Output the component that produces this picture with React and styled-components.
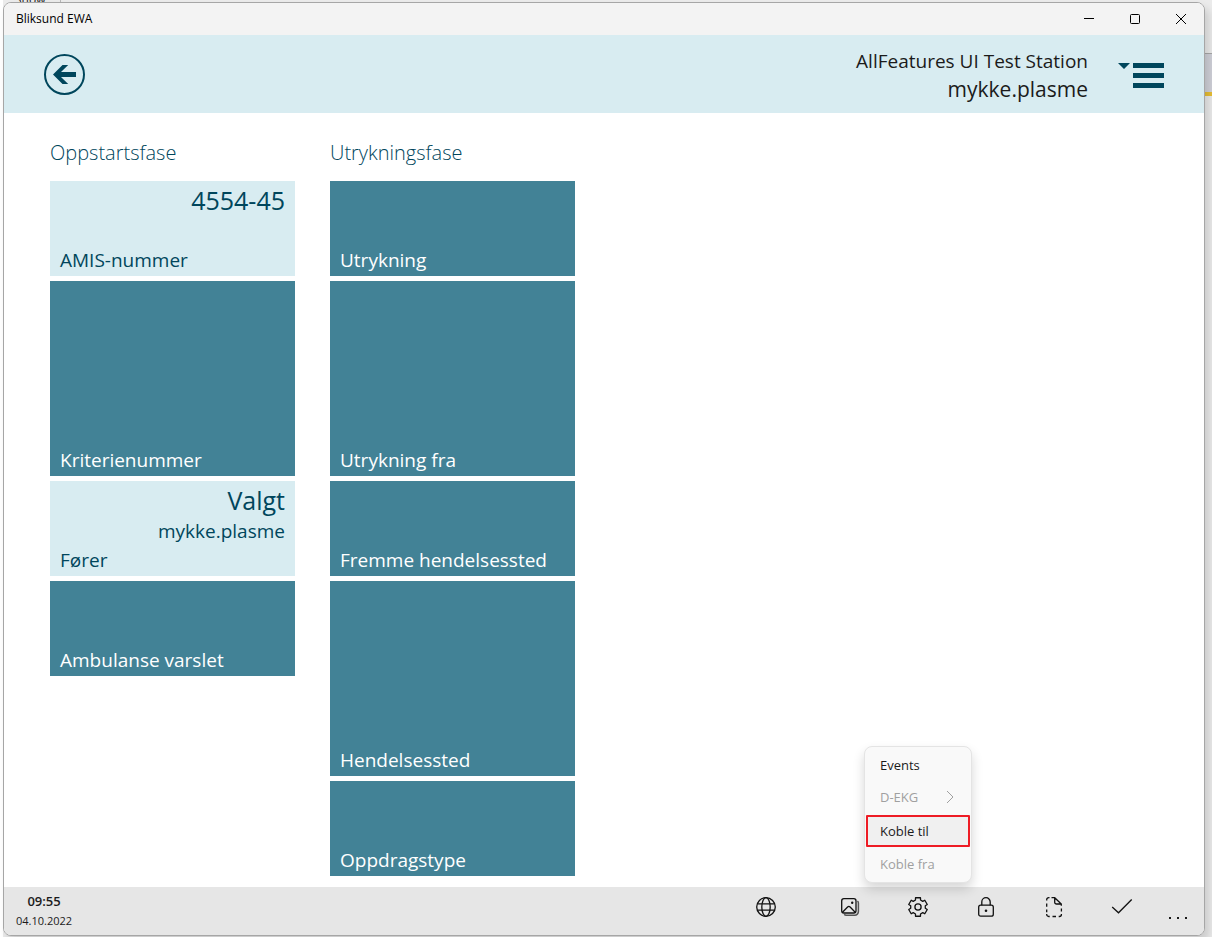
import React from 'react';
import styled, { createGlobalStyle } from 'styled-components';

const Global = createGlobalStyle`
  *, *::before, *::after { box-sizing: border-box; }
  body { margin: 0; font-family: "Open Sans", "Noto Sans", sans-serif; color: #1b1b1b; background: #fff; }
  button { font: inherit; color: inherit; background: none; border: 0; padding: 0; cursor: pointer; }
  h1, h2, p { margin: 0; font-weight: 400; }
  svg { display: block; }
`;

const Desktop = styled.div`
  position: relative;
  display: flex;
  min-height: 100vh;
  padding: 2px 7px 1px 3px;
  background: linear-gradient(#fff, #fff) left / 3px 100% no-repeat, #ebebeb;
`;

const BehindText = styled.span`
  position: absolute;
  top: -8px;
  left: 0;
  width: 61px;
  padding-left: 15px;
  border-right: 1px solid #b8b8b8;
  font-size: 12px;
  line-height: 16px;
`;

const BehindEdge = styled.div`
  position: absolute;
  top: 53px;
  right: 0;
  width: 7px;
  height: 43px;
  background: #d0d1d9;
  border-top: 1px solid #a8a8a8;
  border-bottom: 4px solid #e8bf35;
`;

const AppWindow = styled.div`
  position: relative;
  flex: 1;
  display: flex;
  flex-direction: column;
  min-width: 0;
  border: 1px solid #a6a6a6;
  border-radius: 8px;
  background: #fff;
  box-shadow: 4px 6px 8px rgba(0, 0, 0, 0.14);
`;

const TitleBar = styled.header`
  display: flex;
  align-items: center;
  justify-content: space-between;
  height: 32px;
  padding-left: 12px;
  background: #f3f3f3;
  border-radius: 7px 7px 0 0;
`;

const Title = styled.h1`
  font-size: 12px;
  line-height: 16px;
  color: #000;
`;

const WindowControls = styled.div`
  display: flex;
`;

const ControlButton = styled.button`
  display: grid;
  place-items: center;
  width: 46px;
  height: 32px;
`;

const Banner = styled.div`
  display: flex;
  align-items: center;
  justify-content: space-between;
  height: 78px;
  padding: 0 40px;
  background: #d8ecf1;
  color: #00465c;
`;

const IconButton = styled.button`
  display: block;
`;

const Account = styled.div`
  display: flex;
  align-items: center;
  gap: 30px;
  padding-top: 2px;
`;

const Station = styled.div`
  text-align: right;
  font-size: 19px;
  line-height: 28px;
  color: #1b1b1b;
`;

const UserName = styled.p`
  font-size: 21px;
`;

const Board = styled.main`
  flex: 1;
  display: flex;
  gap: 35px;
  padding: 24px 46px 11px;
`;

const Phase = styled.section`
  display: flex;
  flex-direction: column;
  gap: 5px;
  width: 245px;
`;

const PhaseTitle = styled.h2`
  height: 39px;
  font-size: 20px;
  font-weight: 300;
  line-height: 32px;
  color: #00465c;
`;

const TileButton = styled.button`
  display: flex;
  flex-direction: column;
  justify-content: space-between;
  height: ${(p) => (p.$tall ? 195 : 95)}px;
  padding: 3px 10px 2px;
  text-align: left;
  background: ${(p) => (p.$filled ? '#d8ecf1' : '#428296')};
  color: ${(p) => (p.$filled ? '#00465c' : '#fff')};
`;

const TileValue = styled.span`
  align-self: stretch;
  text-align: right;
  font-size: 25px;
  line-height: 32px;
`;

const TileDetail = styled.span`
  display: block;
  font-size: 19px;
  line-height: 30px;
`;

const TileLabel = styled.span`
  margin-top: auto;
  font-size: 19px;
  line-height: 28px;
`;

const CommandBar = styled.footer`
  display: flex;
  align-items: flex-start;
  justify-content: space-between;
  height: 48px;
  padding: 0 4px 0 12px;
  background: #e6e6e6;
  border-radius: 0 0 7px 7px;
`;

const Clock = styled.div`
  padding-top: 4px;
  text-align: center;
  font-size: 11px;
  line-height: 20px;
`;

const Time = styled.p`
  font-size: 13px;
  font-weight: 600;
`;

const Commands = styled.div`
  display: flex;
`;

const CommandButton = styled.button`
  display: grid;
  place-items: center;
  width: 68px;
  height: 40px;
  margin-right: ${(p) => (p.$apart ? 16 : 0)}px;
  color: #111;
`;

const MoreButton = styled.button`
  display: grid;
  place-items: center;
  width: 44px;
  height: 48px;
  padding-top: 14px;
`;

const MenuAnchor = styled.div`
  position: relative;
`;

const Menu = styled.div`
  position: absolute;
  bottom: 52px;
  left: -20px;
  display: flex;
  flex-direction: column;
  width: 108px;
  padding: 2px 1px;
  background: #f9f9f9;
  border: 1px solid #e4e4e4;
  border-radius: 8px;
  box-shadow: 0 6px 12px rgba(0, 0, 0, 0.16);
`;

const MenuItem = styled.button`
  display: flex;
  align-items: center;
  justify-content: space-between;
  height: 32px;
  padding: 0 14px;
  font-size: 13px;
  line-height: 20px;
  color: #1b1b1b;
  &:disabled { color: #a0a0a0; }
`;

const MarkedItem = styled(MenuItem)`
  margin: 2px 0 1px;
  padding: 0 12px;
  background: #f0f0f0;
  border: 2px solid #ee1c25;
  border-radius: 1px;
`;

const Glyph = ({ size = 22, children, ...rest }) => (
  <svg width={size} height={size} viewBox={`0 0 ${size} ${size}`} fill="none" stroke="currentColor" strokeWidth="1.3" aria-hidden="true" {...rest}>
    {children}
  </svg>
);

const GlobeIcon = () => (
  <Glyph>
    <circle cx="11" cy="11" r="9.3" />
    <ellipse cx="11" cy="11" rx="4.2" ry="9.3" />
    <path d="M2.4 7.8h17.2M2.4 14.2h17.2" />
  </Glyph>
);

const PicturesIcon = () => (
  <Glyph>
    <path d="M18.4 5.2c.7.5 1 1 1 1.8v8.600a3.600 3.600 0 0 1-3.600 3.600H7.200c-.9 0-1.500-.3-2-.9" stroke="#555" strokeWidth="1.500" />
    <rect x="2.700" y="2.700" width="14.300" height="14.300" rx="2.200" />
    <path d="M3.500 16.200l5.100-5.200c.8-.8 1.700-.8 2.500 0l5.100 5.200" />
    <circle cx="13.200" cy="6.800" r="1.200" fill="currentColor" stroke="none" />
  </Glyph>
);

const gearPath = (() => {
  const points = [];
  for (let i = 0; i < 6; i += 1) {
    [[-15, 9.6], [15, 9.6], [20, 7.4]].forEach(([offset, radius]) => {
      const a = ((i * 60 - 90 + offset) * Math.PI) / 180;
      points.push(`${(11 + radius * Math.cos(a)).toFixed(2)} ${(11 + radius * Math.sin(a)).toFixed(2)}`);
    });
    const b = ((i * 60 - 90 + 40) * Math.PI) / 180;
    points.push(`${(11 + 7.4 * Math.cos(b)).toFixed(2)} ${(11 + 7.4 * Math.sin(b)).toFixed(2)}`);
  }
  return `M${points.join('L')}Z`;
})();

const GearIcon = () => (
  <Glyph strokeLinejoin="round">
    <path d={gearPath} />
    <circle cx="11" cy="11" r="3.100" />
  </Glyph>
);

const LockIcon = () => (
  <Glyph>
    <rect x="3.700" y="9.200" width="14.600" height="11" rx="2" />
    <path d="M6.800 9.200V5.900a4.200 4.200 0 0 1 8.400 0v3.300" />
    <circle cx="11" cy="14.700" r="1.300" fill="currentColor" stroke="none" />
  </Glyph>
);

const PageIcon = () => (
  <Glyph>
    <path d="M6.500 1.700H5.700a2 2 0 0 0-2 2v.8M3.700 7.500v3.200M3.700 13.500v2.700M3.700 18v.5a2 2 0 0 0 2 2h1M9.500 20.500h3.500M15.700 20.500h.7a2 2 0 0 0 2-2V18M18.400 12.500v3M8.500 1.700h3.200l6.600 6.400v1.700M11.700 1.700v4.500a1.800 1.800 0 0 0 1.800 1.800h4.800" />
  </Glyph>
);

const CheckIcon = () => (
  <Glyph>
    <path d="M1.200 11l6.300 5.800L20.700 3.500" />
  </Glyph>
);

const BackIcon = () => (
  <Glyph size={41}>
    <circle cx="20.500" cy="20.500" r="19.500" strokeWidth="2" />
    <path d="M9 20.500L18.500 11h5.700l-7.200 7H32v5H17l7.200 7h-5.700z" fill="currentColor" stroke="none" />
  </Glyph>
);

const MenuIcon = () => (
  <svg width="46" height="26" viewBox="0 0 46 26" fill="currentColor" aria-hidden="true">
    <path d="M0 1h12L6 7zM15 1h31v5H15zM15 11h31v5H15zM15 21h31v5H15z" />
  </svg>
);

const phases = [
  {
    title: 'Oppstartsfase',
    tiles: [
      { label: 'AMIS-nummer', value: '4554-45' },
      { label: 'Kriterienummer', tall: true },
      { label: 'Fører', value: 'Valgt', detail: 'mykke.plasme' },
      { label: 'Ambulanse varslet' },
    ],
  },
  {
    title: 'Utrykningsfase',
    tiles: [
      { label: 'Utrykning' },
      { label: 'Utrykning fra', tall: true },
      { label: 'Fremme hendelsessted' },
      { label: 'Hendelsessted', tall: true },
      { label: 'Oppdragstype' },
    ],
  },
];

const Tile = ({ label, value, detail, tall }) => (
  <TileButton $tall={tall} $filled={Boolean(value)}>
    {value && (
      <TileValue>
        {value}
        {detail && <TileDetail>{detail}</TileDetail>}
      </TileValue>
    )}
    <TileLabel>{label}</TileLabel>
  </TileButton>
);

export default function App() {
  return (
    <Desktop>
      <Global />
      <BehindText aria-hidden="true">Show</BehindText>
      <BehindEdge />
      <AppWindow>
        <TitleBar>
          <Title>Bliksund EWA</Title>
          <WindowControls>
            <ControlButton aria-label="Minimize">
              <Glyph size={12} stroke="#000" strokeWidth="1"><path d="M1 5.500h10" /></Glyph>
            </ControlButton>
            <ControlButton aria-label="Maximize">
              <Glyph size={12} stroke="#000" strokeWidth="1"><rect x="1.500" y="1.500" width="9" height="9" rx="1" /></Glyph>
            </ControlButton>
            <ControlButton aria-label="Close">
              <Glyph size={12} stroke="#000" strokeWidth="1"><path d="M1 1l10 10M11 1L1 11" /></Glyph>
            </ControlButton>
          </WindowControls>
        </TitleBar>
        <Banner>
          <IconButton aria-label="Back"><BackIcon /></IconButton>
          <Account>
            <Station>
              <p>AllFeatures UI Test Station</p>
              <UserName>mykke.plasme</UserName>
            </Station>
            <IconButton aria-label="Menu"><MenuIcon /></IconButton>
          </Account>
        </Banner>
        <Board>
          {phases.map((phase) => (
            <Phase key={phase.title}>
              <PhaseTitle>{phase.title}</PhaseTitle>
              {phase.tiles.map((tile) => <Tile key={tile.label} {...tile} />)}
            </Phase>
          ))}
        </Board>
        <CommandBar>
          <Clock>
            <Time>09:55</Time>
            <p>04.10.2022</p>
          </Clock>
          <Commands>
            <CommandButton $apart aria-label="Language"><GlobeIcon /></CommandButton>
            <CommandButton aria-label="Pictures"><PicturesIcon /></CommandButton>
            <MenuAnchor>
              <CommandButton aria-label="Settings" aria-expanded="true"><GearIcon /></CommandButton>
              <Menu>
                <MenuItem>Events</MenuItem>
                <MenuItem disabled>
                  D-EKG
                  <Glyph size={12} strokeWidth="1"><path d="M3 0l6 6-6 6" /></Glyph>
                </MenuItem>
                <MarkedItem>Koble til</MarkedItem>
                <MenuItem disabled>Koble fra</MenuItem>
              </Menu>
            </MenuAnchor>
            <CommandButton aria-label="Lock"><LockIcon /></CommandButton>
            <CommandButton aria-label="Page"><PageIcon /></CommandButton>
            <CommandButton aria-label="Confirm"><CheckIcon /></CommandButton>
            <MoreButton aria-label="More">
              <svg width="20" height="4" viewBox="0 0 20 4" fill="currentColor" aria-hidden="true">
                <path d="M1 1h2v2H1zM9 1h2v2H9zM17 1h2v2h-2z" />
              </svg>
            </MoreButton>
          </Commands>
        </CommandBar>
      </AppWindow>
    </Desktop>
  );
}
